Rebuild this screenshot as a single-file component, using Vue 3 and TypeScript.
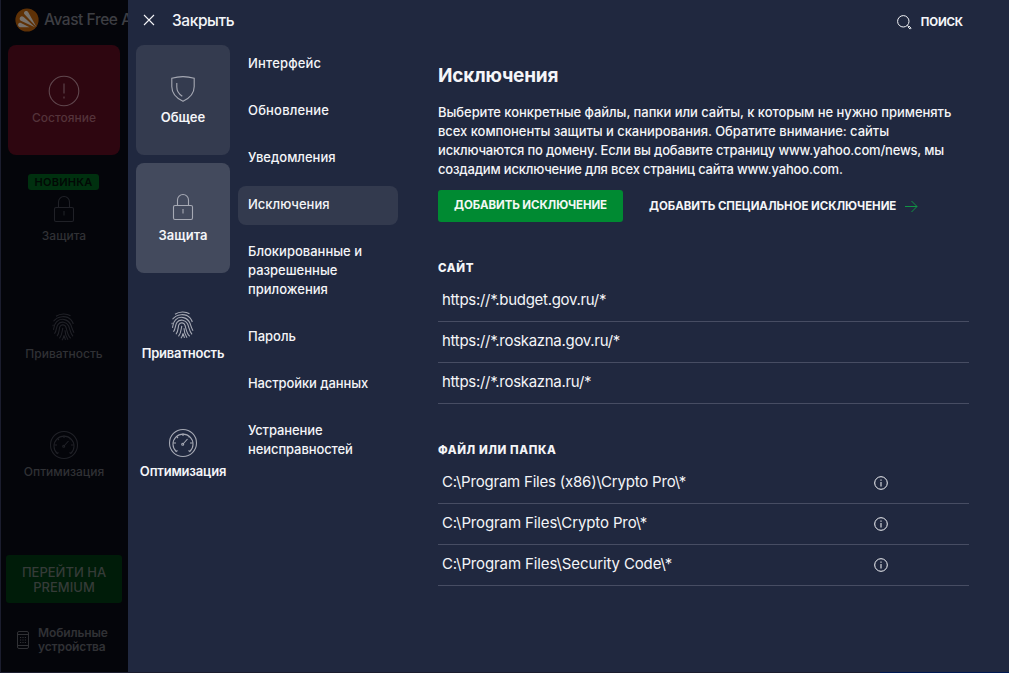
<script setup lang="ts">
interface NavItem {
  id: string
  label: string
  icon: 'alert' | 'shield' | 'lock' | 'finger' | 'gauge'
  badge?: string
}

const mainItems: NavItem[] = [
  { id: 'status', label: 'Состояние', icon: 'alert' },
  { id: 'protect', label: 'Защита', icon: 'lock', badge: 'НОВИНКА' },
  { id: 'privacy', label: 'Приватность', icon: 'finger' },
  { id: 'optimize', label: 'Оптимизация', icon: 'gauge' },
]

const sections: NavItem[] = [
  { id: 'general', label: 'Общее', icon: 'shield' },
  { id: 'protection', label: 'Защита', icon: 'lock' },
  { id: 'privacy', label: 'Приватность', icon: 'finger' },
  { id: 'optimization', label: 'Оптимизация', icon: 'gauge' },
]

const pages: string[][] = [
  ['Интерфейс'],
  ['Обновление'],
  ['Уведомления'],
  ['Исключения'],
  ['Блокированные и', 'разрешенные', 'приложения'],
  ['Пароль'],
  ['Настройки данных'],
  ['Устранение', 'неисправностей'],
]
const activePage = 'Исключения'

const description: string[] = [
  'Выберите конкретные файлы, папки или сайты, к которым не нужно применять',
  'всех компоненты защиты и сканирования. Обратите внимание: сайты',
  'исключаются по домену. Если вы добавите страницу www.yahoo.com/news, мы',
  'создадим исключение для всех страниц сайта www.yahoo.com.',
]

const sites: string[] = ['https://*.budget.gov.ru/*', 'https://*.roskazna.gov.ru/*', 'https://*.roskazna.ru/*']
const files: string[] = [
  'C:\\Program Files (x86)\\Crypto Pro\\*',
  'C:\\Program Files\\Crypto Pro\\*',
  'C:\\Program Files\\Security Code\\*',
]
</script>

<template>
  <svg class="defs" width="0" height="0">
    <symbol id="i-alert" viewBox="0 0 32 32">
      <circle cx="16" cy="16" r="14.8" />
      <path d="M16 8.5v10M16 21.5v2" />
    </symbol>
    <symbol id="i-shield" viewBox="0 0 32 32">
      <path d="M4.800 5.200C12 3.200 20 3.200 27.200 5.200V13.500c0 7-4.200 11.500-11.200 14.800C9 25 4.800 20.500 4.800 13.500Z" />
      <path d="M9.800 10v4c0 4 2 7 5.500 9.300" />
    </symbol>
    <symbol id="i-lock" viewBox="0 0 32 32">
      <rect x="6.500" y="14.500" width="19" height="14" rx="1.500" />
      <path d="M10.500 14.500V9a5.500 5.500 0 0 1 11 0V14.500M16 18v4.500" />
    </symbol>
    <symbol id="i-finger" viewBox="0 0 32 32">
      <g transform="translate(0 .8)">
        <path d="M8 4.500C12.500 1.500 18.500 1.500 22.500 4M5.500 9.500C9.500 4 18.500 3.200 23 8c1 1.200 1.800 2.700 2.300 4.200" />
        <path d="M5.500 18c.500-3.500.500-5.500 3-8 4.500-4.500 12-2.500 14.500 3.500.700 2 1.500 5 3 7.500" />
        <path d="M6.500 22c2.500-3.500 1.500-7 3.500-9.500 3-3.500 8.500-2.500 10.500 1.500 1.500 3 1.500 7 4.500 10.500" />
        <path d="M9 24.500c3-4.500 1.700-7.500 3-9.800 1.500-2.500 5-2 6 .800 1 3 1.500 8.500 4.800 11" />
        <path d="M11.500 26.500c3-4 2.500-7 3.300-10.500M17 18.500c0 3.500 1 6.500 3 9.500M14 28.500c1-1.500 1.700-3 2-5l1.500 4.500M5 14.500l.200-1.500" />
      </g>
    </symbol>
    <symbol id="i-gauge" viewBox="0 0 32 32">
      <circle cx="16" cy="16" r="13.500" />
      <path d="M10.500 23.500l-1.300 1A10 10 0 1 1 22.800 24.500l-1.300-1" />
      <path d="M16 6.500v2.500M9.300 9.300l1.700 1.700M6.500 16H9M23 16h2.500M22.700 9.300l-1 1M16 17l4.500-5" />
      <circle cx="15.700" cy="17.200" r="1" />
    </symbol>
  </svg>

  <div class="window">
    <aside class="app-side">
      <div class="brand">
        <svg class="logo" viewBox="0 0 24 24">
          <circle cx="12" cy="12" r="11.600" fill="#5e3106" />
          <path
            d="M10 3.300C11.500 2.500 12.700 3 13.400 4.400L21.500 19 9.700 6.600C8.600 5.400 8.800 4 10 3.300ZM5.300 9C6.300 8 7.500 8 8.700 9L20 19.200 5.800 12.700C4.400 12 4.300 10.200 5.300 9ZM3.200 16C3.700 14.900 4.800 14.600 6 15L14.500 19.300H5C3.500 19 2.700 17.300 3.200 16Z"
            fill="#77726d"
          />
        </svg>
        <span>Avast Free A</span>
      </div>
      <nav class="main-nav">
        <div v-for="item in mainItems" :key="item.id" class="tile main-tile" :class="item.id">
          <span v-if="item.badge" class="badge">{{ item.badge }}</span>
          <svg class="icon"><use :href="'#i-' + item.icon" /></svg>
          <span class="tile-label">{{ item.label }}</span>
        </div>
      </nav>
      <div class="premium"><span>ПЕРЕЙТИ НА</span><span>PREMIUM</span></div>
      <div class="mobile">
        <svg width="12" height="18" viewBox="0 0 12 18">
          <rect x=".5" y=".5" width="11" height="17" rx="1.500" />
          <path d="M.5 3.500h11M.5 14.500h11" />
          <path d="M3 6.500h6M3 9h6M3 11.500h6" stroke-dasharray="1.200 1.200" />
        </svg>
        <div><div>Мобильные</div><div>устройства</div></div>
      </div>
    </aside>

    <main class="panel">
      <header class="topbar">
        <svg class="close" width="12" height="12" viewBox="0 0 12 12"><path d="M1 1l10 10M11 1L1 11" /></svg>
        <span class="close-label">Закрыть</span>
        <div class="search">
          <svg width="15" height="15" viewBox="0 0 15 15">
            <circle cx="6.300" cy="6.300" r="5.700" />
            <path d="M10.400 10.400l.900.900M11 11.900l.900-.900 2.200 2.200-.900.900Z" />
          </svg>
          <span>ПОИСК</span>
        </div>
      </header>

      <div class="body">
        <nav class="sections">
          <div v-for="item in sections" :key="item.id" class="tile" :class="item.id">
            <svg class="icon"><use :href="'#i-' + item.icon" /></svg>
            <span class="tile-label">{{ item.label }}</span>
          </div>
        </nav>

        <nav class="pages">
          <div v-for="page in pages" :key="page[0]" class="page" :class="{ active: page[0] === activePage }">
            <div v-for="line in page" :key="line">{{ line }}</div>
          </div>
        </nav>

        <section class="content">
          <h1>Исключения</h1>
          <div class="description">
            <div v-for="line in description" :key="line">{{ line }}</div>
          </div>
          <div class="actions">
            <button class="add">ДОБАВИТЬ ИСКЛЮЧЕНИЕ</button>
            <div class="special">
              <span>ДОБАВИТЬ СПЕЦИАЛЬНОЕ ИСКЛЮЧЕНИЕ</span>
              <svg width="13" height="13" viewBox="0 0 13 13"><path d="M0 6.500h12M6.500 1L12 6.500 6.500 12" /></svg>
            </div>
          </div>

          <h2>САЙТ</h2>
          <div v-for="site in sites" :key="site" class="row">
            <span>{{ site }}</span>
          </div>

          <h2 class="files-title">ФАЙЛ ИЛИ ПАПКА</h2>
          <div v-for="file in files" :key="file" class="row file">
            <span>{{ file }}</span>
            <svg class="info" width="14" height="14" viewBox="0 0 14 14">
              <circle cx="7" cy="7" r="6.300" />
              <path d="M7 3.500v1.300M7 6v4.500" />
            </svg>
          </div>
        </section>
      </div>
    </main>
    <div class="edge"></div>
  </div>
</template>

<style>
body {
  margin: 0;
  overflow: hidden;
}
</style>

<style scoped>
.defs {
  position: absolute;
}
.window {
  display: grid;
  grid-template-columns: 128px 1fr;
  grid-template-rows: 672px 1px;
  width: 1009px;
  height: 673px;
  font-family: Inter, 'Noto Sans', sans-serif;
  color: #f4f5f8;
  background: #20283f;
  white-space: nowrap;
}
svg {
  fill: none;
  stroke: currentColor;
  flex: none;
}
.app-side {
  box-sizing: border-box;
  border-left: 1px solid #1b1d2e;
  background: #04050a;
  color: #303135;
  overflow: hidden;
}
.brand {
  display: flex;
  align-items: center;
  gap: 5px;
  height: 39px;
  padding-left: 14px;
  font-size: 15.5px;
  font-weight: 500;
  letter-spacing: -0.45px;
  color: #3d3e43;
}
.logo {
  width: 24px;
  height: 24px;
  stroke: none;
}
.main-nav {
  display: flex;
  flex-direction: column;
  gap: 8px;
  padding: 6px 8px 0 7px;
}
.tile {
  display: flex;
  flex-direction: column;
  align-items: center;
  box-sizing: border-box;
  position: relative;
  height: 110px;
  padding-top: 28px;
  border-radius: 8px;
  font-size: 13px;
  font-weight: 600;
  line-height: 18px;
  letter-spacing: -0.2px;
}
.icon {
  width: 32px;
  height: 32px;
  color: #a6a9b4;
  stroke-width: 1.1;
}
.tile-label {
  margin-top: 3px;
}
.general .tile-label,
.protection .tile-label {
  letter-spacing: 0.05px;
}
.main-tile {
  padding-top: 30px;
  font-size: 12px;
  font-weight: 500;
  letter-spacing: 0;
}
.main-tile .icon {
  color: #202127;
}
.main-tile .tile-label {
  margin-top: 2px;
}
.main-tile.status {
  background: #2e0610;
  color: #54333a;
}
.main-tile.status .icon {
  color: #60474e;
}
.badge {
  position: absolute;
  top: 11px;
  left: 20px;
  width: 71px;
  height: 16px;
  border-radius: 3px;
  background: #00300f;
  color: #020805;
  font-size: 11px;
  font-weight: 600;
  line-height: 16px;
  letter-spacing: 0.25px;
  text-align: center;
}
.premium {
  display: flex;
  flex-direction: column;
  align-items: center;
  justify-content: center;
  box-sizing: border-box;
  margin: 46px 6px 0 5px;
  padding-top: 2px;
  height: 48px;
  border-radius: 3px;
  background: #001c09;
  color: #353b38;
  font-size: 13px;
  font-weight: 500;
  line-height: 15px;
}
.mobile {
  display: flex;
  align-items: center;
  gap: 9px;
  padding: 23px 0 0 16px;
  font-size: 12px;
  font-weight: 600;
  line-height: 14px;
  letter-spacing: -0.12px;
}
.panel {
  min-width: 0;
}
.topbar {
  display: flex;
  align-items: center;
  height: 40px;
  padding: 0 46px 0 15px;
}
.close {
  stroke-width: 1.1;
}
.close-label {
  margin-left: 17px;
  font-size: 15.5px;
  font-weight: 500;
  letter-spacing: -0.4px;
}
.search {
  display: flex;
  align-items: center;
  gap: 9px;
  margin-left: auto;
  padding-top: 3px;
  font-size: 11.5px;
  font-weight: 700;
  letter-spacing: -0.15px;
}
.search svg {
  margin-top: 2px;
}
.body {
  display: grid;
  grid-template-columns: 94px 160px 531px;
  padding: 5px 0 0 8px;
}
.sections {
  display: flex;
  flex-direction: column;
  gap: 8px;
}
.general {
  background: #343b4f;
}
.protection {
  background: #434a5d;
}
.pages {
  display: flex;
  flex-direction: column;
  gap: 8px;
  margin: 0 -8px 0 8px;
  font-size: 13px;
  font-weight: 500;
  line-height: 19px;
}
.page {
  padding: 9px 10px 11px;
  border-radius: 8px;
}
.page:nth-child(-n + 2) {
  letter-spacing: 0.18px;
}
.page:nth-child(n + 7) {
  letter-spacing: -0.1px;
}
.page.active {
  background: #333a4e;
}
.content {
  width: 531px;
  margin-left: 48px;
}
h1 {
  margin: 18px 0 0;
  font-size: 19px;
  font-weight: 700;
  line-height: 26px;
  letter-spacing: -0.2px;
}
.description {
  margin-top: 14px;
  font-size: 13px;
  font-weight: 500;
  line-height: 19px;
  letter-spacing: -0.05px;
}
.description div:nth-child(n + 3) {
  letter-spacing: -0.185px;
}
.actions {
  display: flex;
  align-items: center;
  margin-top: 11px;
}
.add {
  box-sizing: border-box;
  width: 185px;
  height: 32px;
  padding: 0 0 2px;
  border: 0;
  border-radius: 3px;
  background: #008a32;
  color: #f2f8f4;
  font-family: inherit;
  font-size: 11.5px;
  font-weight: 700;
  letter-spacing: -0.1px;
}
.special {
  display: flex;
  align-items: center;
  gap: 9px;
  margin-left: 26px;
  font-size: 11.5px;
  font-weight: 700;
  letter-spacing: -0.04px;
}
.special span {
  padding-bottom: 1px;
}
.special svg {
  color: #109444;
}
h2 {
  margin: 37px 0 0;
  font-size: 11.5px;
  font-weight: 800;
  line-height: 18px;
  letter-spacing: 0.6px;
}
h2 + .row {
  margin-top: 4px;
}
.row {
  display: flex;
  align-items: center;
  justify-content: space-between;
  box-sizing: border-box;
  height: 41px;
  padding: 0 81px 3px 4px;
  border-bottom: 1px solid #474d63;
  font-size: 15px;
  letter-spacing: -0.3px;
}
.row.file {
  letter-spacing: -0.12px;
}
.files-title + .row.file {
  letter-spacing: -0.21px;
}
.info {
  margin-top: 2px;
}
.edge {
  grid-column: 1 / 3;
  background: linear-gradient(to right, #1b1d2e 880px, #001850 880px);
}
</style>
